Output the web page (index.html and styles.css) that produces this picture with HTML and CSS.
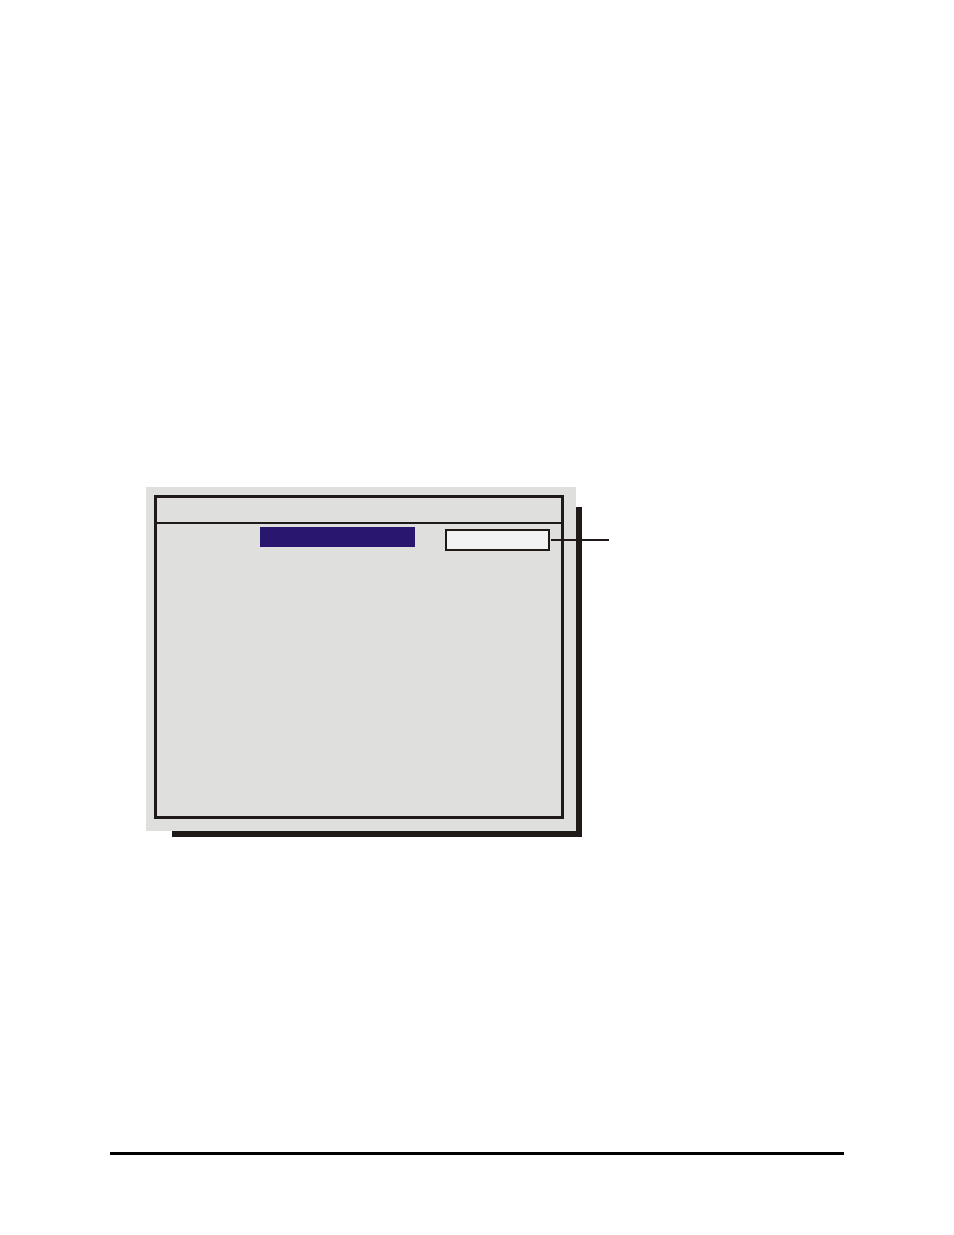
FILE: index.html
```
<!DOCTYPE html>
<html lang="en">
<head>
    <meta charset="UTF-8">
    <meta name="viewport" content="width=device-width, initial-scale=1.0">
    <title>Setup Screen</title>
    <link rel="stylesheet" href="styles.css">
</head>
<body>
    <main>
        <div class="screen">
            <div class="frame">
                <div class="title-bar"></div>
                <div class="row">
                    <label class="selected" for="value"></label>
                    <div class="field">
                        <input type="text" id="value" aria-label="Value">
                        <span class="leader"></span>
                    </div>
                </div>
            </div>
        </div>
    </main>
    <footer></footer>
</body>
</html>
```

FILE: styles.css
```
* {
    box-sizing: border-box;
}

body {
    display: flex;
    flex-direction: column;
    min-height: 100vh;
    margin: 0;
    padding: 487px 110px 80px;
    background-color: #fff;
    font-family: "Liberation Sans", Arial, sans-serif;
}

main {
    flex: 1;
    padding-left: 36px;
}

.screen {
    position: relative;
    max-width: 430px;
    padding: 8px 12px 12px 8px;
    background-color: #dfdfdd;
}

/* hard shadow on the right and bottom edges */
.screen::before {
    content: "";
    position: absolute;
    z-index: -1;
    top: 20px;
    right: -6px;
    bottom: -6px;
    left: 26px;
    background-color: #1f1a17;
}

.frame {
    min-height: 324px;
    border: 3px solid #1f1a17;
}

.title-bar {
    height: 26px;
    border-bottom: 2px solid #1f1a17;
}

.row {
    display: flex;
    justify-content: flex-end;
    gap: 30px;
    padding: 3px 11px;
}

.selected {
    width: 155px;
    height: 20px;
    background-color: #28166f;
}

.field {
    position: relative;
    width: 105px;
    padding-top: 2px;
}

.field input {
    display: block;
    width: 100%;
    height: 22px;
    padding: 0 4px;
    border: 2px solid #1f1a17;
    border-radius: 0;
    background-color: #f3f3f3;
    font: inherit;
}

/* callout line pointing out of the screen */
.leader {
    position: absolute;
    top: 12px;
    left: 106px;
    width: 58px;
    height: 2px;
    background-color: #1f1a17;
}

footer {
    border-top: 3px solid #000;
}
```
